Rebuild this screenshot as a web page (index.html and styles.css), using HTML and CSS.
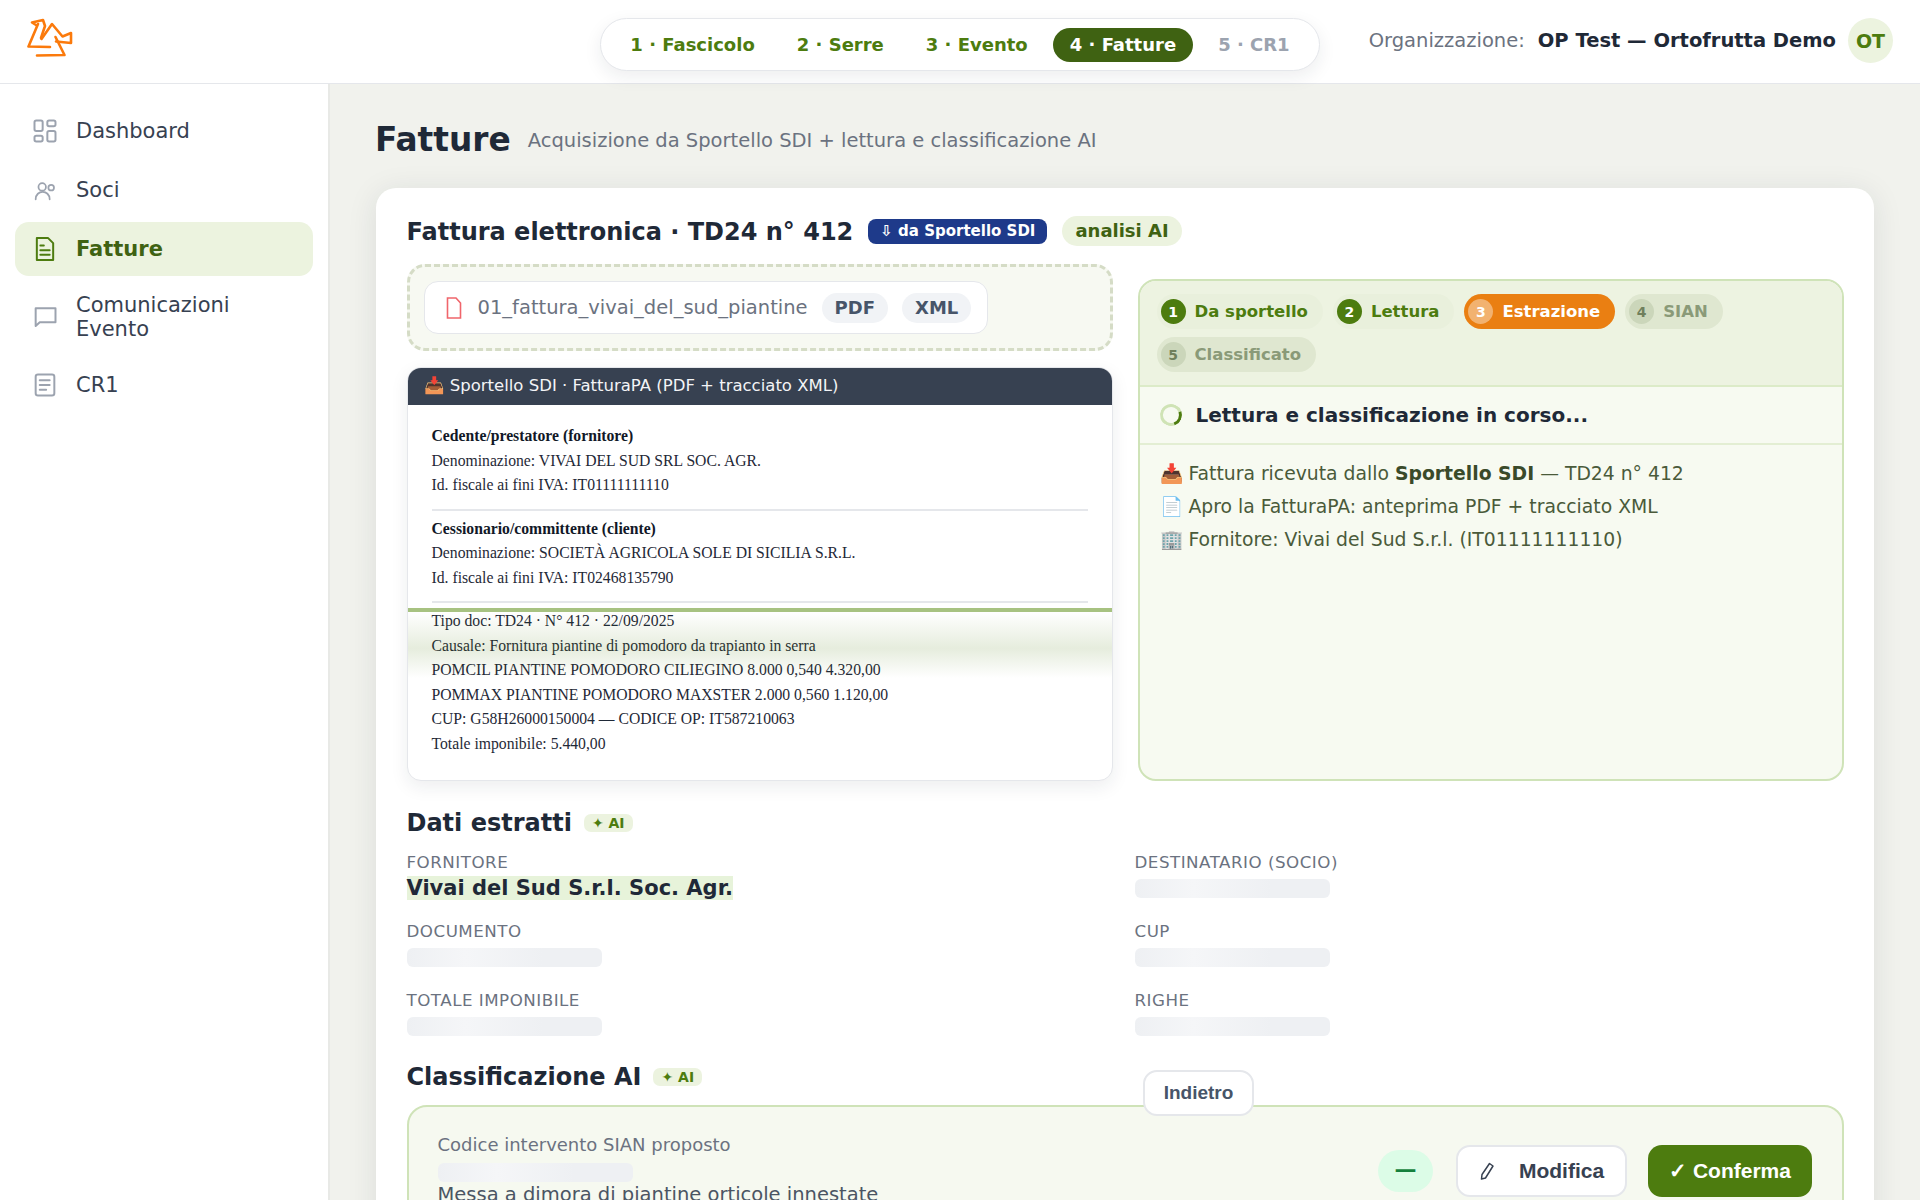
FILE: index.html
```html
<!DOCTYPE html>
<html lang="it">
<head>
  <meta charset="UTF-8" />
  <meta name="viewport" content="width=device-width, initial-scale=1.0"/>
  <title>Fatture</title>
  <link rel="stylesheet" href="styles.css">
</head>
<body>
  <header class="topbar">
    <div class="logo">
      <svg width="46" height="40" viewBox="0 0 46 40" fill="none" stroke="#fb7a0c" stroke-width="2.600" stroke-linecap="round" stroke-linejoin="round">
        <path d="M9 7 L5 4.500 L16 2 L18 8 L14 20"/>
        <path d="M11 6 L1.500 28.500 L23 29"/>
        <path d="M14.500 21 L25 6 L35.500 18.500 L44 15 L44 25 L29 23.500"/>
        <path d="M28.500 19 L37.500 37 L10 37.500"/>
      </svg>
    </div>
    <nav class="stepper">
      <span class="step">1 · Fascicolo</span>
      <span class="step">2 · Serre</span>
      <span class="step">3 · Evento</span>
      <span class="step active">4 · Fatture</span>
      <span class="step locked">5 · CR1</span>
    </nav>
    <div class="org">
      <span class="org-label">Organizzazione:</span>
      <strong class="org-name">OP Test — Ortofrutta Demo</strong>
      <span class="avatar">OT</span>
    </div>
  </header>

  <div class="layout">
    <aside class="sidebar">
      <a class="nav-item">
        <svg class="nav-icon" viewBox="0 0 24 24"><rect x="3" y="3" width="7" height="9" rx="1.500"/><rect x="14" y="3" width="7" height="5" rx="1.500"/><rect x="14" y="12" width="7" height="9" rx="1.500"/><rect x="3" y="16" width="7" height="5" rx="1.500"/></svg>
        <span>Dashboard</span>
      </a>
      <a class="nav-item">
        <svg class="nav-icon thin" viewBox="0 0 24 24"><circle cx="9.600" cy="9.400" r="3.200"/><circle cx="17.300" cy="10" r="2.400"/><path d="M4 20 C4 11.500 16 11.500 16 20"/></svg>
        <span>Soci</span>
      </a>
      <a class="nav-item current">
        <svg class="nav-icon" viewBox="0 0 24 24"><path d="M5 2.500 H14.500 L19 7 V21.500 H5 Z"/><path d="M8 9 H11 M8 13 H16 M8 17 H16"/></svg>
        <span>Fatture</span>
      </a>
      <a class="nav-item">
        <svg class="nav-icon" viewBox="0 0 24 24"><path d="M4 4.500 H21 V16.500 H7.500 L4 19.700 Z"/></svg>
        <span>Comunicazioni Evento</span>
      </a>
      <a class="nav-item">
        <svg class="nav-icon" viewBox="0 0 24 24"><rect x="4" y="3" width="16" height="18" rx="2"/><path d="M7.500 8 H16 M7.500 12 H16 M7.500 16 H13"/></svg>
        <span>CR1</span>
      </a>
    </aside>

    <main class="main">
      <div class="page-head">
        <h1>Fatture</h1>
        <p>Acquisizione da Sportello SDI + lettura e classificazione AI</p>
      </div>

      <section class="card">
        <div class="card-head">
          <h2>Fattura elettronica · TD24 n° 412</h2>
          <span class="badge-sdi">⇩ da Sportello SDI</span>
          <span class="badge-ai">analisi AI</span>
        </div>

        <div class="columns">
          <div class="col-left">
            <div class="dropzone">
              <div class="file-chip">
                <svg width="16" height="22" viewBox="0 0 16 22" fill="none" stroke="#f0656b" stroke-width="1.600"><path d="M1.500 1 H10 L14.500 6 V21 H1.500 Z"/></svg>
                <span class="file-name">01_fattura_vivai_del_sud_piantine</span>
                <span class="tag">PDF</span>
                <span class="tag">XML</span>
              </div>
            </div>

            <div class="doc">
              <div class="doc-head">📥 Sportello SDI · FatturaPA (PDF + tracciato XML)</div>
              <div class="doc-body">
                <div><b>Cedente/prestatore (fornitore)</b></div>
                <div>Denominazione: VIVAI DEL SUD SRL SOC. AGR.</div>
                <div>Id. fiscale ai fini IVA: IT01111111110</div>
                <hr>
                <div><b>Cessionario/committente (cliente)</b></div>
                <div>Denominazione: SOCIETÀ AGRICOLA SOLE DI SICILIA S.R.L.</div>
                <div>Id. fiscale ai fini IVA: IT02468135790</div>
                <hr>
                <div>Tipo doc: TD24 · N° 412 · 22/09/2025</div>
                <div>Causale: Fornitura piantine di pomodoro da trapianto in serra</div>
                <div>POMCIL PIANTINE POMODORO CILIEGINO 8.000 0,540 4.320,00</div>
                <div>POMMAX PIANTINE POMODORO MAXSTER 2.000 0,560 1.120,00</div>
                <div>CUP: G58H26000150004 — CODICE OP: IT587210063</div>
                <div>Totale imponibile: 5.440,00</div>
              </div>
              <div class="scan"></div>
            </div>
          </div>

          <div class="progress">
            <div class="progress-steps">
              <span class="chip done"><i>1</i>Da sportello</span>
              <span class="chip done"><i>2</i>Lettura</span>
              <span class="chip running"><i>3</i>Estrazione</span>
              <span class="chip"><i>4</i>SIAN</span>
              <span class="chip"><i>5</i>Classificato</span>
            </div>
            <div class="progress-status">
              <span class="spinner"></span>
              <strong>Lettura e classificazione in corso...</strong>
            </div>
            <div class="progress-log">
              <div>📥 Fattura ricevuta dallo <b>Sportello SDI</b> — TD24 n° 412</div>
              <div>📄 Apro la FatturaPA: anteprima PDF + tracciato XML</div>
              <div>🏢 Fornitore: Vivai del Sud S.r.l. (IT01111111110)</div>
            </div>
          </div>
        </div>

        <div class="section-head extracted">
          <h2>Dati estratti</h2>
          <span class="ai-tag">✦ AI</span>
        </div>
        <div class="fields">
          <div class="field">
            <label>Fornitore</label>
            <div class="value"><mark>Vivai del Sud S.r.l. Soc. Agr.</mark></div>
          </div>
          <div class="field">
            <label>Destinatario (socio)</label>
            <div class="value"><span class="skeleton"></span></div>
          </div>
          <div class="field">
            <label>Documento</label>
            <div class="value"><span class="skeleton"></span></div>
          </div>
          <div class="field">
            <label>CUP</label>
            <div class="value"><span class="skeleton"></span></div>
          </div>
          <div class="field">
            <label>Totale imponibile</label>
            <div class="value"><span class="skeleton"></span></div>
          </div>
          <div class="field">
            <label>Righe</label>
            <div class="value"><span class="skeleton"></span></div>
          </div>
        </div>

        <div class="section-head classify">
          <h2>Classificazione AI</h2>
          <span class="ai-tag">✦ AI</span>
        </div>
        <div class="sian">
          <div class="sian-info">
            <div class="sian-label">Codice intervento SIAN proposto</div>
            <span class="skeleton"></span>
            <div class="sian-desc">Messa a dimora di piantine orticole innestate</div>
          </div>
          <div class="sian-actions">
            <span class="score">—</span>
            <button class="btn-edit">
              <svg width="16" height="20" viewBox="0 0 16 20" fill="none" stroke="#374151" stroke-width="1.500" stroke-linejoin="round"><path d="M10.500 2.500 L14 5 L6.500 17 L2.500 18 L3 13.500 Z"/></svg>
              Modifica
            </button>
            <button class="btn-confirm">✓ Conferma</button>
          </div>
        </div>
      </section>
    </main>
  </div>

  <button class="btn-back">Indietro</button>
</body>
</html>
```

FILE: styles.css
```css
* {
  box-sizing: border-box;
}

body {
  margin: 0;
  height: 100vh;
  overflow: hidden;
  display: flex;
  flex-direction: column;
  background: #f1f2ed;
  color: #1f2937;
  font-family: "DejaVu Sans", sans-serif;
}

.topbar {
  position: relative;
  z-index: 2;
  flex: none;
  height: 84px;
  padding: 0 27px;
  display: grid;
  grid-template-columns: 1fr auto 1fr;
  align-items: center;
  background: #fff;
  border-bottom: 1px solid #e5e7eb;
}

.logo {
  display: flex;
  margin-bottom: 8px;
}

.stepper {
  display: flex;
  align-items: center;
  gap: 8px;
  height: 53px;
  margin-top: 6px;
  padding: 0 12px;
  background: #fff;
  border: 1px solid #e5e7eb;
  border-radius: 27px;
  box-shadow: 0 6px 18px rgba(31, 41, 55, 0.08);
}

.step {
  padding: 0 17px;
  height: 34px;
  line-height: 34px;
  border-radius: 17px;
  font-size: 18px;
  font-weight: 700;
  color: #4d7c0f;
  white-space: nowrap;
}

.step.active {
  background: #3f6212;
  color: #fff;
}

.step.locked {
  color: #9ca3af;
}

.org {
  justify-self: end;
  display: flex;
  align-items: center;
  margin-bottom: 2px;
  font-size: 19.500px;
  white-space: nowrap;
}

.org-label {
  color: #6b7280;
}

.org-name {
  margin-left: 13px;
  color: #1f2937;
}

.avatar {
  width: 45px;
  height: 45px;
  margin-left: 12px;
  border-radius: 50%;
  background: #ecf3df;
  color: #4d7c0f;
  font-size: 19px;
  font-weight: 700;
  display: flex;
  align-items: center;
  justify-content: center;
}

.layout {
  flex: 1;
  min-height: 0;
  display: flex;
}

.sidebar {
  flex: none;
  width: 330px;
  padding: 20px 15px;
  display: flex;
  flex-direction: column;
  gap: 5px;
  background: #fff;
  border-right: 2px solid #e8e9e6;
}

.nav-item {
  min-height: 54px;
  padding: 12px 16px;
  display: flex;
  align-items: center;
  gap: 17px;
  border-radius: 14px;
  font-size: 21px;
  line-height: 24px;
  color: #374151;
}

.nav-icon {
  flex: none;
  width: 28px;
  height: 28px;
  fill: none;
  stroke: #9ca3af;
  stroke-width: 1.700;
  stroke-linejoin: round;
  stroke-linecap: round;
}

.nav-icon.thin {
  stroke-width: 1.500;
}

.nav-item.current {
  background: #ecf3df;
  color: #3f6212;
  font-weight: 700;
}

.nav-item.current .nav-icon {
  stroke: #4d7c0f;
}

.main {
  flex: 1;
  min-width: 0;
  padding: 30px 46px 0;
  overflow: hidden;
}

.page-head {
  height: 52px;
  margin-bottom: 22px;
  display: flex;
  align-items: center;
  gap: 17px;
}

.page-head h1 {
  margin: 0 0 0 -1px;
  font-size: 32.800px;
  color: #1f2937;
}

.page-head p {
  margin: 0;
  font-size: 19.500px;
  color: #6b7280;
}

.card {
  padding: 28px 30px 40px 30.500px;
  background: #fff;
  border-radius: 20px;
  box-shadow: 0 4px 30px rgba(31, 41, 55, 0.1);
}

.card-head {
  height: 30px;
  margin-bottom: 18px;
  display: flex;
  align-items: center;
}

.card-head h2,
.section-head h2 {
  margin: 0;
  font-size: 24px;
  color: #1f2937;
}

.card-head h2 {
  margin-top: 1px;
}

.badge-sdi {
  margin-left: 15px;
  height: 25px;
  padding: 0 12px;
  line-height: 24px;
  border-radius: 8px;
  background: #1e3a8a;
  color: #fff;
  font-size: 15px;
  font-weight: 700;
}

.badge-ai {
  margin-left: 15px;
  height: 30px;
  padding: 0 13px;
  line-height: 29px;
  border-radius: 15px;
  background: #ecf3df;
  color: #3f6212;
  font-size: 18px;
  font-weight: 700;
}

.columns {
  display: grid;
  grid-template-columns: 706px 706px;
  gap: 25px;
}

.dropzone {
  height: 87px;
  padding: 14px;
  background: #f7f9f2;
  border: 3px dashed #d5dcc6;
  border-radius: 18px;
}

.file-chip {
  display: inline-flex;
  align-items: center;
  height: 53px;
  padding: 0 16px 0 21px;
  background: #fff;
  border: 1.500px solid #e5e7eb;
  border-radius: 14px;
}

.file-name {
  margin-left: 16px;
  font-size: 19.500px;
  color: #6b7280;
}

.tag {
  margin-left: 14px;
  height: 30px;
  padding: 0 13px;
  line-height: 30px;
  border-radius: 15px;
  background: #f1f3f6;
  color: #475569;
  font-size: 18px;
  font-weight: 700;
}

.doc {
  position: relative;
  margin-top: 16px;
  background: #fff;
  border: 1px solid #e5e7eb;
  border-radius: 14px;
  overflow: hidden;
  box-shadow: 0 6px 18px rgba(31, 41, 55, 0.08);
}

.doc-head {
  height: 37px;
  padding: 0 16px;
  line-height: 36px;
  background: #374151;
  color: #f3f4f6;
  font-size: 16.500px;
}

.doc-body {
  padding: 19px 24px 24px;
  font-family: "Liberation Serif", serif;
  font-size: 15.700px;
  line-height: 24.500px;
  color: #1f2937;
}

.doc-body b {
  color: #111827;
}

.doc-body hr {
  height: 2px;
  margin: 11px 0 6px;
  border: none;
  background: #e5e7eb;
}

.scan {
  position: absolute;
  left: 0;
  right: 0;
  top: 240px;
  height: 70px;
  border-top: 4px solid #a7c281;
  background: linear-gradient(to bottom, rgba(77, 124, 15, 0), rgba(77, 124, 15, 0.14) 55%, rgba(77, 124, 15, 0));
}

.progress {
  margin-top: 15px;
  display: flex;
  flex-direction: column;
  background: #f7faf1;
  border: 2px solid #cfe3b8;
  border-radius: 18px;
  overflow: hidden;
}

.progress-steps {
  padding: 13px 17px;
  display: flex;
  flex-wrap: wrap;
  gap: 8px 10px;
  background: #edf3e1;
  border-bottom: 2px solid #dcebc8;
}

.chip {
  height: 35px;
  padding: 0 15px 0 4px;
  display: inline-flex;
  align-items: center;
  gap: 9px;
  border-radius: 18px;
  background: #dfe7d0;
  color: #8a9a78;
  font-size: 16.500px;
  font-weight: 700;
}

.chip i {
  width: 25px;
  height: 25px;
  border-radius: 50%;
  background: #cbd6ba;
  color: #6f7f5c;
  font-size: 14px;
  font-style: normal;
  display: flex;
  align-items: center;
  justify-content: center;
}

.chip.done {
  background: #e9f0dc;
  color: #4d7c0f;
}

.chip.done i {
  background: #4d7c0f;
  color: #fff;
}

.chip.running {
  background: #ea7f12;
  color: #fff;
}

.chip.running i {
  background: rgba(255, 255, 255, 0.4);
  color: #fff;
}

.progress-status {
  height: 58px;
  padding: 0 20px;
  display: flex;
  align-items: center;
  gap: 14px;
  border-bottom: 2px solid #e3eed3;
  font-size: 20px;
}

.spinner {
  width: 22px;
  height: 22px;
  border-radius: 50%;
  border: 3px solid #cfe3b5;
  border-right-color: #4d7c0f;
  transform: rotate(25deg);
}

.progress-log {
  padding: 12px 20px;
  font-size: 18.800px;
  line-height: 33px;
  color: #4a5a3a;
}

.progress-log b {
  color: #3a4a2a;
}

.section-head {
  height: 30px;
  display: flex;
  align-items: center;
  gap: 12px;
}

.section-head.extracted {
  margin-top: 27px;
}

.section-head.classify {
  margin-top: 24px;
}

.ai-tag {
  height: 18px;
  padding: 0 8px;
  line-height: 18px;
  border-radius: 7px;
  background: #ecf3df;
  color: #4d7c0f;
  font-size: 14px;
  font-weight: 700;
}

.fields {
  margin-top: 14px;
  display: grid;
  grid-template-columns: 728px 1fr;
  row-gap: 21px;
}

.field label {
  display: block;
  height: 20px;
  margin-bottom: 4px;
  line-height: 20px;
  font-size: 16.700px;
  letter-spacing: 0.5px;
  text-transform: uppercase;
  color: #6b7280;
}

.value {
  height: 24px;
  display: flex;
  align-items: center;
  font-size: 21px;
  font-weight: 700;
}

.value mark {
  display: block;
  line-height: 24px;
  background: #e7f3da;
  color: #1f2937;
}

.skeleton {
  display: block;
  width: 195px;
  height: 19px;
  border-radius: 6px;
  background: linear-gradient(90deg, #eef0f3, #f5f6f8 30%, #eef0f3 70%);
}

.sian {
  margin-top: 13px;
  padding: 26px 30px 25px 29px;
  display: flex;
  align-items: center;
  justify-content: space-between;
  background: #f6f9f0;
  border: 2px solid #cfe3b8;
  border-radius: 20px;
}

.sian-label,
.sian-desc {
  line-height: 24px;
  font-size: 18px;
  color: #6b7280;
}

.sian-info .skeleton {
  margin: 6px 0 1px;
}

.sian-desc {
  font-size: 19.500px;
  color: #4b5563;
}

.sian-actions {
  display: flex;
  align-items: center;
  gap: 21px;
  margin-top: 2px;
}

.score {
  width: 55px;
  height: 42px;
  margin-right: 2px;
  line-height: 40px;
  border-radius: 21px;
  background: #dcfce7;
  color: #15803d;
  font-size: 22px;
  font-weight: 700;
  text-align: center;
}

button {
  font-family: "Liberation Sans", sans-serif;
  font-weight: 700;
  cursor: pointer;
}

.btn-edit,
.btn-confirm {
  height: 52px;
  border-radius: 14px;
  font-size: 21px;
}

.btn-edit {
  width: 171px;
  display: flex;
  align-items: center;
  justify-content: center;
  gap: 24px;
  background: #fff;
  border: 2px solid #e5e7eb;
  color: #374151;
}

.btn-confirm {
  width: 164px;
  background: #4d7c0f;
  border: none;
  color: #fff;
}

.btn-back {
  position: fixed;
  left: 1143px;
  top: 1070px;
  z-index: 3;
  width: 111px;
  height: 46px;
  background: #fff;
  border: 2px solid #e5e7eb;
  border-radius: 14px;
  color: #475569;
  font-size: 19px;
}
```
